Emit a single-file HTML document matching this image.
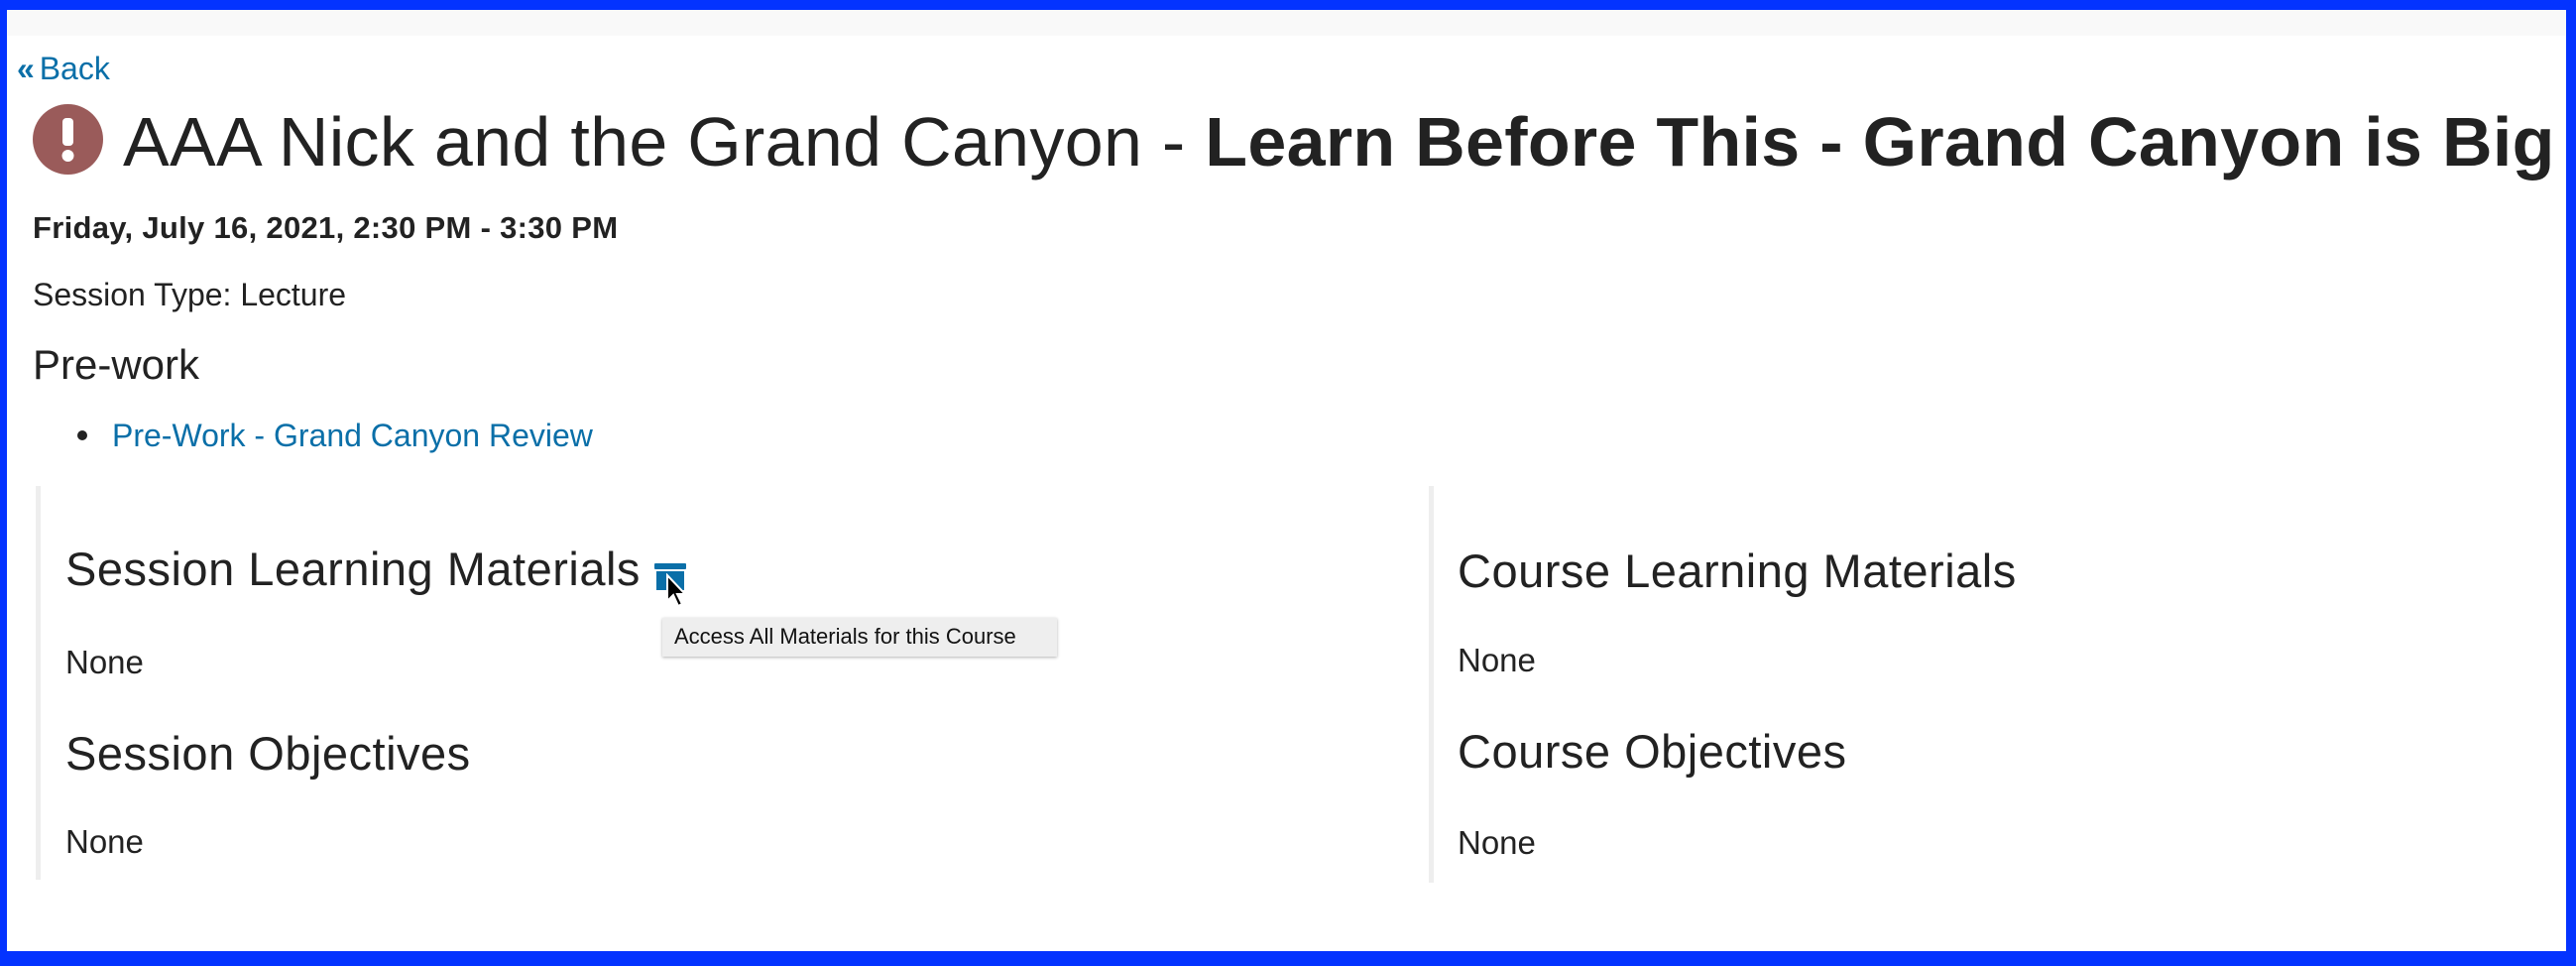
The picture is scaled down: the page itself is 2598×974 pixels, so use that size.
<!DOCTYPE html>
<html><head><meta charset="utf-8"><style>
html,body{margin:0;padding:0;}
body{width:2598px;height:974px;position:relative;overflow:hidden;background:#0433ff;font-family:"Liberation Sans",sans-serif;color:#222;}
#page{position:absolute;left:7px;top:10px;width:2581px;height:949px;background:#fff;}
.a{position:absolute;white-space:nowrap;line-height:1;}
.link{color:#0a6fa8;}
</style></head><body>
<div id="page">
<div style="position:absolute;left:0;top:0;width:2581px;height:26px;background:#f9f9f9"></div>
</div>
<div class="a link" style="left:17px;top:53px;font-size:32px;"><span style="font-weight:bold;letter-spacing:-4px">«</span> Back</div>
<svg style="position:absolute;left:33px;top:105px" width="71" height="71" viewBox="0 0 71 71"><circle cx="35.5" cy="35.5" r="35.5" fill="#9a5b5a"/><rect x="30" y="14" width="11" height="28" rx="4" fill="#fff"/><circle cx="35.5" cy="52" r="6" fill="#fff"/></svg>
<div class="a" style="left:124px;top:108px;font-size:70px;letter-spacing:0.3px">AAA Nick and the Grand Canyon - <b>Learn Before This - Grand Canyon is Big</b></div>
<div class="a" style="left:33px;top:214px;font-size:31px;font-weight:bold;letter-spacing:0.3px">Friday, July 16, 2021, 2:30 PM - 3:30 PM</div>
<div class="a" style="left:33px;top:281px;font-size:32px">Session Type: Lecture</div>
<div class="a" style="left:33px;top:347px;font-size:42px">Pre-work</div>
<div style="position:absolute;left:78px;top:434px;width:10px;height:10px;border-radius:50%;background:#222"></div>
<div class="a link" style="left:113px;top:423px;font-size:32px">Pre-Work - Grand Canyon Review</div>

<div style="position:absolute;left:36px;top:490px;width:5px;height:397px;background:#eee"></div>
<div class="a" style="left:66px;top:550px;font-size:47px;letter-spacing:0.5px">Session Learning Materials</div>
<div style="position:absolute;left:660px;top:568px;width:32px;height:6px;background:#0a6fa8;border-radius:1px"></div>
<div style="position:absolute;left:662px;top:576px;width:28px;height:19px;background:#0a6fa8"></div>
<svg style="position:absolute;left:670px;top:578px" width="26" height="38" viewBox="0 0 26 38"><path d="M3 2 L3 28 L9 22 L14 33 L18 31 L13 21 L21 21 Z" fill="#000" stroke="#fff" stroke-width="2"/></svg>
<div style="position:absolute;left:668px;top:623px;width:398px;height:39px;background:#eee;box-shadow:0 1px 3px rgba(0,0,0,.3)"></div>
<div class="a" style="left:680px;top:631px;font-size:22px;color:#111">Access All Materials for this Course</div>
<div class="a" style="left:66px;top:651px;font-size:33px">None</div>
<div class="a" style="left:66px;top:736px;font-size:47px;letter-spacing:0.5px">Session Objectives</div>
<div class="a" style="left:66px;top:832px;font-size:33px">None</div>

<div style="position:absolute;left:1441px;top:490px;width:5px;height:400px;background:#eee"></div>
<div class="a" style="left:1470px;top:552px;font-size:47px;letter-spacing:0.5px">Course Learning Materials</div>
<div class="a" style="left:1470px;top:649px;font-size:33px">None</div>
<div class="a" style="left:1470px;top:734px;font-size:47px;letter-spacing:0.5px">Course Objectives</div>
<div class="a" style="left:1470px;top:833px;font-size:33px">None</div>
</body></html>
